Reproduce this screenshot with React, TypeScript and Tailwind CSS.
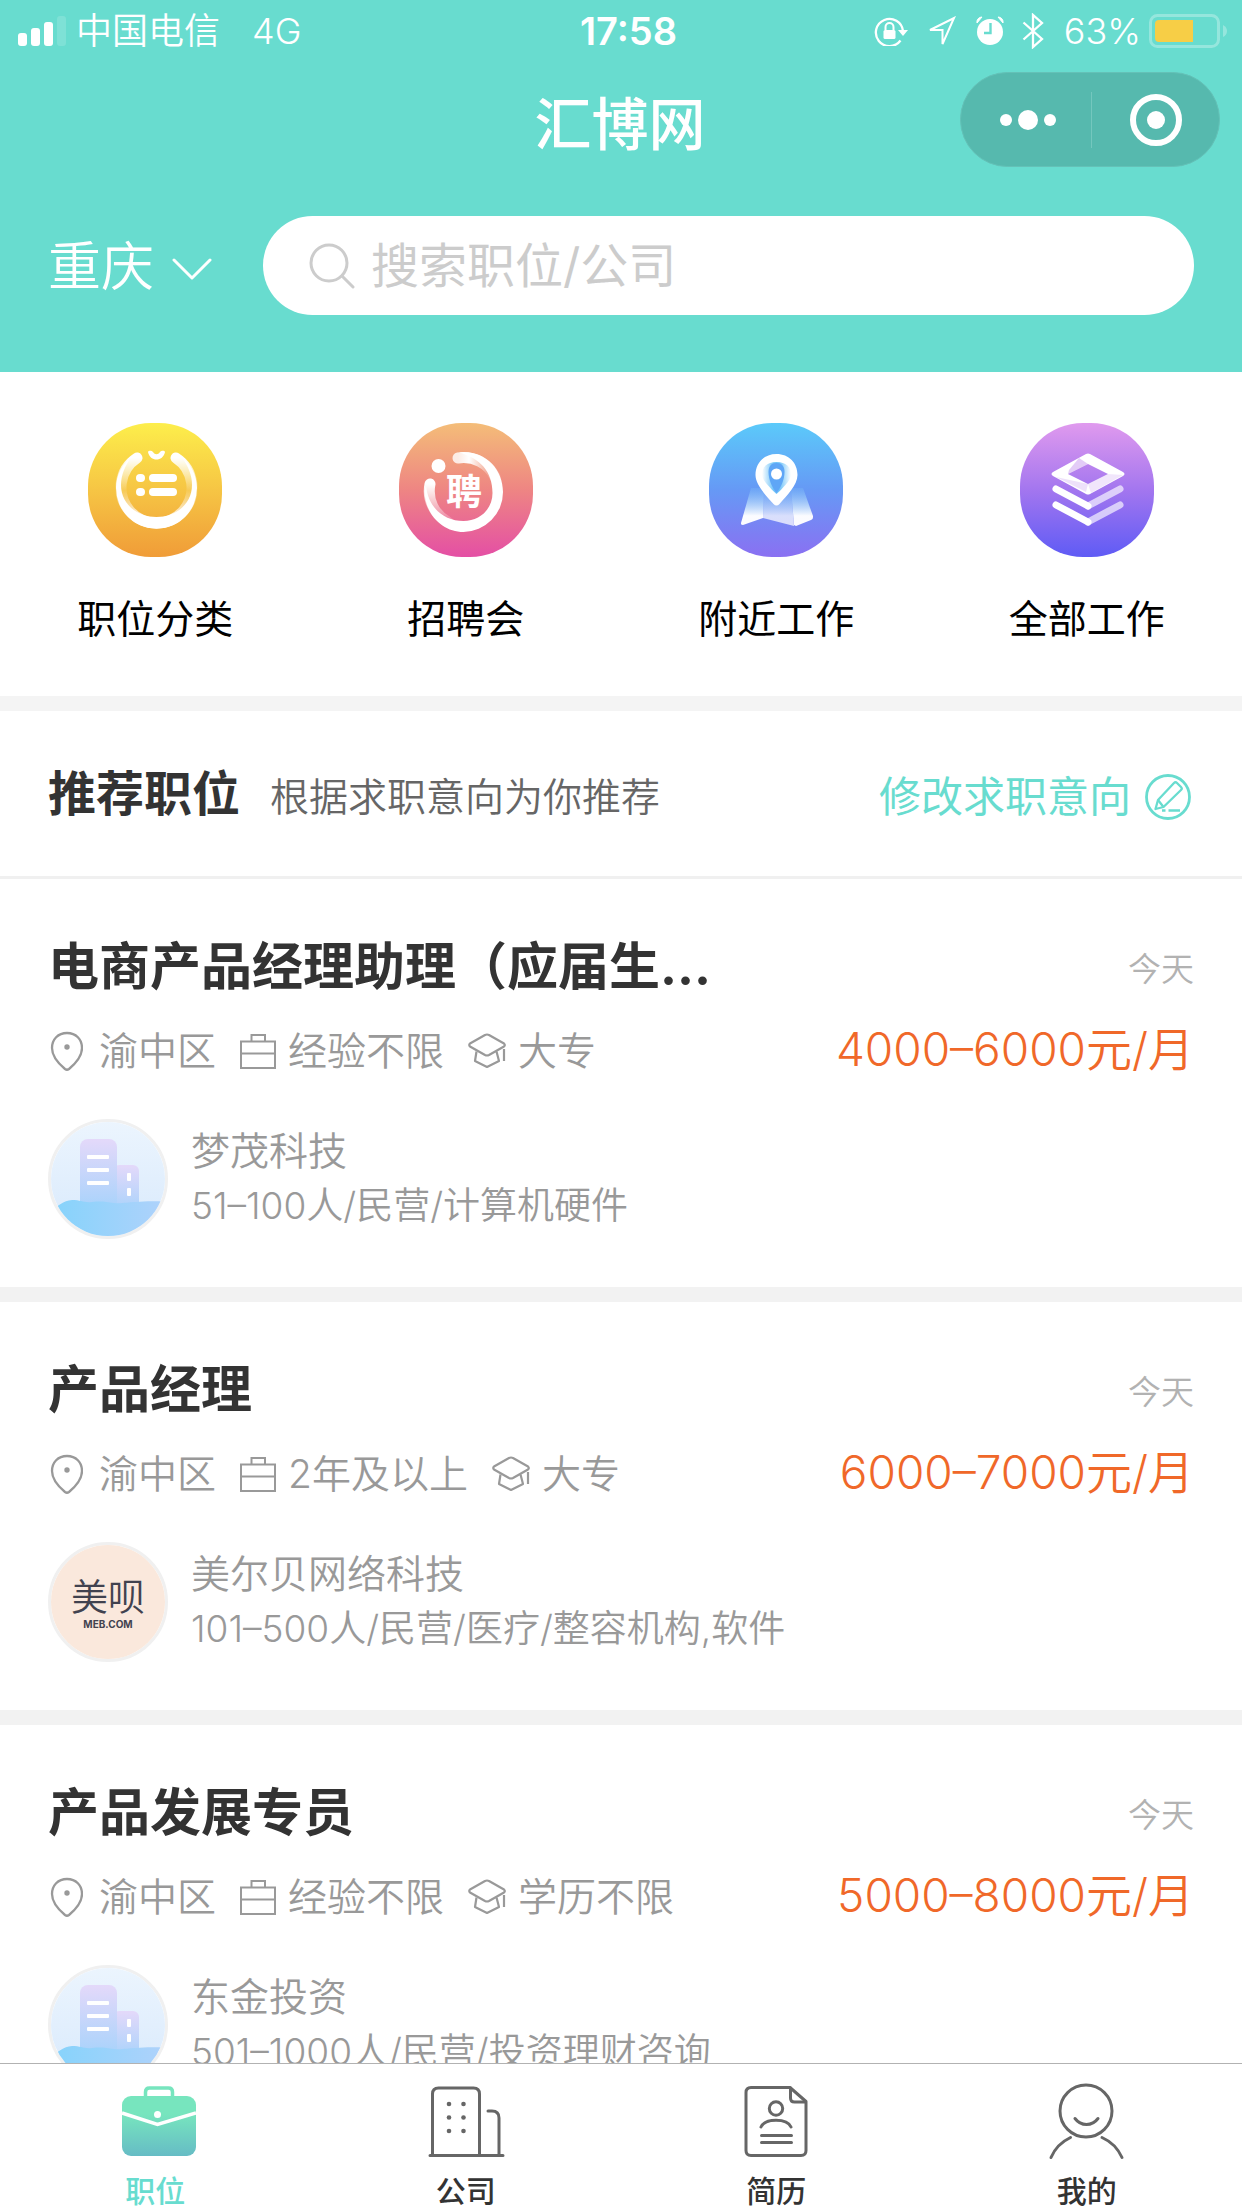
import React from 'react';

type Job = {
  id: number;
  title: string;
  date: string;
  area: string;
  experience: string;
  education: string;
  salary: string;
  company: string;
  detail: string;
  logo: 'default' | 'meb';
};

const JOBS: Job[] = [
  {
    id: 1,
    title: '电商产品经理助理（应届生...',
    date: '今天',
    area: '渝中区',
    experience: '经验不限',
    education: '大专',
    salary: '4000–6000元/月',
    company: '梦茂科技',
    detail: '51–100人/民营/计算机硬件',
    logo: 'default',
  },
  {
    id: 2,
    title: '产品经理',
    date: '今天',
    area: '渝中区',
    experience: '2年及以上',
    education: '大专',
    salary: '6000–7000元/月',
    company: '美尔贝网络科技',
    detail: '101–500人/民营/医疗/整容机构,软件',
    logo: 'meb',
  },
  {
    id: 3,
    title: '产品发展专员',
    date: '今天',
    area: '渝中区',
    experience: '经验不限',
    education: '学历不限',
    salary: '5000–8000元/月',
    company: '东金投资',
    detail: '501–1000人/民营/投资理财咨询',
    logo: 'default',
  },
];

const SHORTCUTS = [
  { label: '职位分类', Icon: CategoryIcon },
  { label: '招聘会', Icon: FairIcon },
  { label: '附近工作', Icon: NearbyIcon },
  { label: '全部工作', Icon: AllJobsIcon },
];

const TABS = [
  { label: '职位', Icon: JobsTabIcon, active: true },
  { label: '公司', Icon: CompanyTabIcon, active: false },
  { label: '简历', Icon: ResumeTabIcon, active: false },
  { label: '我的', Icon: MineTabIcon, active: false },
];

/* Shortcut icons */

function Badge({ id, stops, children }: { id: string; stops: string[]; children: React.ReactNode }) {
  return (
    <svg viewBox="0 0 134 134" className="w-[134px] h-[134px]" aria-hidden="true">
      <defs>
        <linearGradient id={id} x1="0" y1="0" x2="0" y2="1">
          {stops.map((color, i) => (
            <stop key={color} offset={i / (stops.length - 1)} stopColor={color} />
          ))}
        </linearGradient>
      </defs>
      <rect width="134" height="134" rx="63" fill={`url(#${id})`} />
      {children}
    </svg>
  );
}

function CategoryIcon() {
  return (
    <Badge id="badge-category" stops={['#fdee4b', '#f6c544', '#f09c38']}>
      <defs>
        <linearGradient id="category-fade" x1="0" y1="0" x2="0" y2="1">
          <stop offset="0" stopColor="#fff" />
          <stop offset="0.5" stopColor="#fff" stopOpacity="0.1" />
          <stop offset="1" stopColor="#fff" />
        </linearGradient>
      </defs>
      <path d="M49 35a35.5 35.5 0 1 0 39 0" fill="none" stroke="url(#category-fade)" strokeWidth="11" strokeLinecap="round" />
      <path d="M45 32C34 41 28 52 28 65a40.5 40.5 0 0 0 81 0c0-13-6-24-17-33 8 10 12 20 12 30 0 18-15 32-35.500 32S33 80 33 62c0-10 4-20 12-30z" fill="#fff" />
      <path d="M60 29c2 10 15 10 17 0-1-2-4-1-5 0-2 3-5 3-7 0-1-1-4-2-5 0z" fill="#fff" />
      <rect x="48" y="51" width="9" height="8" rx="4" fill="#fff" />
      <rect x="48" y="65" width="9" height="8" rx="4" fill="#fff" />
      <rect x="61" y="51" width="28" height="8" rx="4" fill="#fff" />
      <rect x="61" y="65" width="28" height="8" rx="4" fill="#fff" />
    </Badge>
  );
}

function FairIcon() {
  return (
    <Badge id="badge-fair" stops={['#f4bd78', '#ee8583', '#e44fa5']}>
      <defs>
        <linearGradient id="fair-fade" x1="0" y1="0" x2="1" y2="0">
          <stop offset="0" stopColor="#fff" stopOpacity="0.8" />
          <stop offset="0.3" stopColor="#fff" />
          <stop offset="0.8" stopColor="#fff" stopOpacity="0.2" />
        </linearGradient>
        <linearGradient id="fair-tail" x1="0" y1="0" x2="0" y2="1">
          <stop offset="0" stopColor="#fff" />
          <stop offset="1" stopColor="#fff" stopOpacity="0.1" />
        </linearGradient>
      </defs>
      <path d="M59 35a35 35 0 0 1 37 19" fill="none" stroke="url(#fair-fade)" strokeWidth="11" strokeLinecap="round" />
      <path d="M31 61a35 35 0 0 0 18 38" fill="none" stroke="url(#fair-tail)" strokeWidth="11" strokeLinecap="round" />
      <path d="M60 29.500c25-3 44 15.500 44 39.500a40 40 0 0 1-39.500 40C44 109 26 92 25.500 68L27 62c2 23 18 36 37.500 36C81 98 93.500 86 93.500 70c0-22-13-35-33.500-40.500z" fill="#fff" />
      <circle cx="39.5" cy="43" r="7" fill="#fff" />
      <text x="65" y="82" textAnchor="middle" fill="#fff" fontSize="36" className="font-bold">
        聘
      </text>
    </Badge>
  );
}

function NearbyIcon() {
  return (
    <Badge id="badge-nearby" stops={['#5bcafa', '#6699f5', '#8a70f2']}>
      <defs>
        <linearGradient id="map-fade" x1="0" y1="64" x2="0" y2="96" gradientUnits="userSpaceOnUse">
          <stop offset="0" stopColor="#8fe0fa" stopOpacity="0.1" />
          <stop offset="0.9" stopColor="#fff" stopOpacity="0.97" />
        </linearGradient>
        <linearGradient id="pin-fade" x1="0" y1="0" x2="1" y2="0">
          <stop offset="0" stopColor="#fff" />
          <stop offset="0.4" stopColor="#6fc3f8" />
          <stop offset="0.6" stopColor="#6fc3f8" />
          <stop offset="1" stopColor="#fff" />
        </linearGradient>
      </defs>
      <path d="M42 65h13l-1 30-20 7c-2 0-2-1-2-2z" fill="url(#map-fade)" />
      <path d="M55 65h27l3 38-31-8z" fill="url(#map-fade)" opacity="0.75" />
      <path d="M82 65h12l10 28c0 2 0 3-2 4l-15 6-2-1z" fill="url(#map-fade)" />
      <path
        d="M67.500 31C55 31 46.500 40 46.500 52c0 10 11 21 18 29 2 2 4 2 6 0 7-8 18-19 18-29 0-12-8.500-21-21-21z"
        fill="#fff"
      />
      <path d="M67.500 39C58 39 53 44 53 52c0 5 9 14 14.500 19C73 66 82 57 82 52c0-8-5-13-14.500-13z" fill="url(#pin-fade)" />
      <path d="M67.500 40c-6 0-8 4-8 9 0 8 4 16 8 21 4-5 8-13 8-21 0-5-2-9-8-9z" fill="#5fa6f6" />
      <circle cx="67.5" cy="51" r="5.5" fill="#fff" />
    </Badge>
  );
}

function AllJobsIcon() {
  return (
    <Badge id="badge-all" stops={['#e09aee', '#a376ef', '#5f5bf5']}>
      <path
        fillRule="evenodd"
        d="M66 31q2-1 4 0l33 18q3 2 0 4L70 71q-2 1-4 0L33 53q-3-2 0-4zM68 41L48 51l20 10 20-10z"
        fill="#fff"
      />
      <path d="M59 35l9 6-20 10 1-4z" fill="#c79af0" opacity="0.5" />
      <path d="M103 52L71 70l-3-9 20-10z" fill="#c79af0" opacity="0.25" />
      <path d="M36 54l32 7-2 8z" fill="#c79af0" opacity="0.3" />
      <g fill="none" stroke="#fff" strokeWidth="7" strokeLinecap="round" strokeLinejoin="round">
        <path d="M100 66L68 83M100 82l-32 17" opacity="0.65" />
        <path d="M36 66l32 17M36 82l32 17" />
      </g>
    </Badge>
  );
}

/* Tab bar icons */

function JobsTabIcon() {
  return (
    <svg viewBox="-7 0 81 70" className="w-[81px] h-[70px]" aria-hidden="true">
      <defs>
        <linearGradient id="tab-jobs" x1="0" y1="0" x2="0" y2="1">
          <stop offset="0.3" stopColor="#77e5be" />
          <stop offset="1" stopColor="#66bcc5" />
        </linearGradient>
      </defs>
      <path d="M23.500 11V6q0-4 4-4h19q4 0 4 4v5" fill="none" stroke="#77e5be" strokeWidth="3.5" />
      <rect y="10" width="74" height="60" rx="9" fill="url(#tab-jobs)" />
      <path d="M0 27l35.500 11.500L74 27" fill="none" stroke="#fff" strokeWidth="3.5" />
      <circle cx="35.5" cy="28.5" r="3.5" fill="#fff" />
    </svg>
  );
}

function CompanyTabIcon() {
  return (
    <svg viewBox="-2 0 79 71" className="w-[79px] h-[71px]" fill="none" stroke="#666" strokeWidth="3" strokeLinecap="round" aria-hidden="true">
      <path d="M4.500 69V8q0-6 6-6h35q6 0 6 6v61" />
      <path d="M60 25h4q7 0 7 7v37M2 69.500h73" />
      <g fill="#666" stroke="none">
        <circle cx="21" cy="18" r="2.3" />
        <circle cx="35.5" cy="18" r="2.3" />
        <circle cx="21" cy="31.5" r="2.3" />
        <circle cx="35.5" cy="31.5" r="2.3" />
        <circle cx="21" cy="45" r="2.3" />
        <circle cx="35.5" cy="45" r="2.3" />
      </g>
    </svg>
  );
}

function ResumeTabIcon() {
  return (
    <svg viewBox="0 0 64 71" className="w-16 h-[71px]" fill="none" stroke="#666" strokeWidth="3" strokeLinecap="round" strokeLinejoin="round" aria-hidden="true">
      <path d="M46 1.500H7q-5 0-5 5v58q0 5 5 5h50q5 0 5-5V15.500z" />
      <path d="M46.500 2v10q0 4 4 4H61" />
      <circle cx="32" cy="22.5" r="6.7" />
      <path d="M17 41c4-9 26-9 30 0M17.500 49.500h30M17.500 56.500h30" />
    </svg>
  );
}

function MineTabIcon() {
  return (
    <svg viewBox="0 0 75 77" className="w-[75px] h-[77px]" fill="none" stroke="#666" strokeWidth="3" strokeLinecap="round" aria-hidden="true">
      <circle cx="37" cy="28" r="26" />
      <path d="M26 35.500c6 8 17 8 23 0M21.500 54.500C12 59 6 65 2 74.500M53 54.500c9 4 15.500 10 20 20" />
    </svg>
  );
}

/* Job meta icons */

function PinIcon() {
  return (
    <svg viewBox="0 0 34 40" className="w-[34px] h-10" fill="none" stroke="#999" strokeWidth="2.3" strokeLinejoin="round" aria-hidden="true">
      <path d="M18 2C9 2 3 8.500 3 17c0 8.500 7 16 13 21q2 1.500 4 0c6-5 13-12.500 13-21C33 8.500 27 2 18 2z" />
      <circle cx="18" cy="16" r="2.7" fill="#999" stroke="none" />
    </svg>
  );
}

function BriefcaseIcon() {
  return (
    <svg viewBox="0 0 36 36" className="w-9 h-9" fill="none" stroke="#999" strokeWidth="2" aria-hidden="true">
      <path d="M1 8.500h34V35H1zM11.500 8V2h13.500v6M1 20.500h34" />
    </svg>
  );
}

function CapIcon() {
  return (
    <svg viewBox="0 0 38 36" className="w-[38px] h-9" fill="none" stroke="#999" strokeWidth="2.2" strokeLinejoin="round" aria-hidden="true">
      <path d="M17 2q2-1 4 0l15 8.500q1.500 1.500 0 3L21 22q-2 1-4 0L2 13.500q-1.500-1.500 0-3z" />
      <path d="M8.500 18.500L7 28l12 6 12-6-2.500-9.500M36 16v12" />
    </svg>
  );
}

function EditIcon() {
  return (
    <svg viewBox="0 0 46 46" className="w-[46px] h-[46px]" fill="none" stroke="#68dccf" strokeWidth="2.8" strokeLinejoin="round" aria-hidden="true">
      <circle cx="23" cy="23" r="21.5" />
      <path d="M29 9q1.500-1.500 3 0l4 4q1.500 1.500 0 3L18.500 33 10.500 35l2.500-9z" strokeWidth="2.3" />
      <path d="M13 26l5.500 7M17 36.500h3.500M23.500 36.500H35" strokeWidth="2.3" />
    </svg>
  );
}

/* Default company picture */

function BuildingLogo() {
  return (
    <svg viewBox="3 3 114 114" className="size-full" aria-hidden="true">
      <defs>
        <linearGradient id="logo-sky" x1="0" y1="0" x2="0" y2="1">
          <stop offset="0" stopColor="#ecf5fe" />
          <stop offset="1" stopColor="#d8e9fc" />
        </linearGradient>
        <linearGradient id="logo-tower" x1="0" y1="0" x2="0" y2="1">
          <stop offset="0" stopColor="#e4d9fa" />
          <stop offset="1" stopColor="#a3d2fb" />
        </linearGradient>
        <linearGradient id="logo-ground" x1="0" y1="0" x2="1" y2="0">
          <stop offset="0" stopColor="#84d3fb" />
          <stop offset="1" stopColor="#b0d2fb" />
        </linearGradient>
      </defs>
      <rect width="120" height="120" fill="url(#logo-sky)" />
      <rect x="65" y="46" width="26" height="50" rx="6" fill="url(#logo-tower)" />
      <rect x="32" y="20" width="37" height="75" rx="8" fill="url(#logo-tower)" />
      <path d="M0 96c8-8 14-14 24-15 9 0 12 3 20 2 10-1 14 0 22 1 8 1 12-1 22-1 10-1 22-1 32 0v36H0z" fill="url(#logo-ground)" />
      <g fill="#fff">
        <rect x="39" y="36" width="22" height="4" rx="1" />
        <rect x="39" y="49" width="22" height="4" rx="1" />
        <rect x="39" y="62" width="22" height="4" rx="1" />
        <rect x="79" y="54" width="4" height="8" rx="1" />
        <rect x="79" y="69" width="4" height="8" rx="1" />
      </g>
    </svg>
  );
}

function MebLogo() {
  return (
    <div className="size-full pt-1 bg-[#fae8dc] text-[#41424f] flex flex-col items-center justify-center">
      <span className="text-[37px] leading-10">美呗</span>
      <span className="text-[10px] leading-3 font-bold">MEB.COM</span>
    </div>
  );
}

function StatusBar() {
  return (
    <div className="grid grid-cols-3 items-center h-[62px] pl-[18px] pr-[15px] text-[36px] leading-[62px]">
      <div className="flex items-center">
        <svg viewBox="0 0 48 30" className="w-12 h-[30px]" fill="#fff" aria-hidden="true">
          <rect y="17" width="9" height="13" rx="3" />
          <rect x="13" y="12" width="9" height="18" rx="3" />
          <rect x="26" y="6" width="9" height="24" rx="3" />
          <rect x="39" width="9" height="30" rx="3" opacity="0.15" />
        </svg>
        <span className="ml-[10px] font-[350]">中国电信</span>
        <span className="ml-8 font-[350]">4G</span>
      </div>
      <span className="pl-3 text-center text-[38px] font-semibold">17:58</span>
      <div className="flex items-center justify-end">
        <svg viewBox="0 0 34 30" className="w-[34px] h-[30px] mr-[18px]" fill="none" stroke="#fff" strokeWidth="2.3" aria-hidden="true">
          <path d="M26.500 24.500A13.600 13.600 0 1 1 29 15" />
          <path d="M24 14h10l-5 6z" fill="#fff" stroke="none" />
          <rect x="9.5" y="14" width="12" height="9" rx="1.5" fill="#fff" stroke="none" />
          <path d="M11.500 14v-3a4 4 0 0 1 8 0v3" strokeWidth="2" />
        </svg>
        <svg viewBox="0 0 30 30" className="w-[30px] h-[30px] mr-5" fill="none" stroke="#fff" strokeWidth="2" aria-hidden="true">
          <path d="M4 14L28 2 16.500 28V14z" />
        </svg>
        <svg viewBox="0 0 28 30" className="w-7 h-[30px] mr-[18px]" fill="#fff" aria-hidden="true">
          <circle cx="14" cy="16" r="13" />
          <path d="M1 7a5 5 0 0 1 5-6zM27 7a5 5 0 0 0-5-6z" stroke="#fff" />
          <path d="M14.500 7v10H8" fill="none" stroke="#68dccf" strokeWidth="2.4" />
        </svg>
        <svg viewBox="0 0 22 36" className="w-[22px] h-9 mr-5" fill="none" stroke="#fff" strokeWidth="2.3" aria-hidden="true">
          <path d="M1.500 9.500L20 26l-9 8V2l9 8L1.500 26.500" />
        </svg>
        <span className="font-[350]">63%</span>
        <svg viewBox="0 0 78 34" className="w-[78px] h-[34px] ml-2" aria-hidden="true">
          <rect x="1.5" y="1.5" width="68" height="31" rx="7" fill="none" stroke="#fff" strokeWidth="3" opacity="0.3" />
          <path d="M44 6H10q-4 0-4 4v14q0 4 4 4h34z" fill="#f7ce46" />
          <path d="M74 11q4 2 4 6t-4 6z" fill="#fff" opacity="0.3" />
        </svg>
      </div>
    </div>
  );
}

function Header() {
  return (
    <header className="shrink-0 bg-[#68dccf] text-white">
      <StatusBar />
      <div className="grid grid-cols-3 items-center pt-[10px] pr-[22px]">
        <span />
        <h1 className="pt-[10px] pl-5 text-[57px] leading-[84px] text-center font-medium">汇博网</h1>
        <div className="justify-self-end flex items-center w-[260px] h-[95px] pl-1 rounded-full bg-[#56b9ae] border border-[#64c1b7]">
          <button aria-label="更多" className="flex-1 flex items-center justify-center gap-[6px]">
            <span className="size-3 rounded-full bg-white" />
            <span className="size-5 rounded-full bg-white" />
            <span className="size-3 rounded-full bg-white" />
          </button>
          <span className="w-px h-14 bg-[#74c7be]" />
          <button aria-label="关闭" className="flex-1 flex items-center justify-center">
            <span className="size-[52px] rounded-full border-[6px] border-white flex items-center justify-center">
              <span className="size-[18px] rounded-full bg-white" />
            </span>
          </button>
        </div>
      </div>
      <div className="flex items-center px-12 pt-[49px] pb-[57px]">
        <button className="flex items-center text-[53px] leading-[96px] font-[350]">
          <span className="pt-0.5">重庆</span>
          <svg viewBox="0 0 40 24" className="w-10 h-6 ml-[18px] mt-2" fill="none" stroke="#fff" strokeWidth="3" strokeLinecap="round" strokeLinejoin="round" aria-hidden="true">
            <path d="M2 2l18 18L38 2" />
          </svg>
        </button>
        <label className="ml-[51px] flex-1 flex items-center h-[99px] rounded-full bg-white px-[46px]">
          <svg viewBox="0 0 46 46" className="w-[46px] h-[46px] shrink-0" fill="none" stroke="#ccc" strokeWidth="3" strokeLinecap="round" aria-hidden="true">
            <circle cx="20" cy="20" r="18" />
            <path d="M33 33l11 11" />
          </svg>
          <input
            type="search"
            aria-label="搜索职位/公司"
            placeholder="搜索职位/公司"
            className="ml-4 flex-1 min-w-0 text-[48px] leading-[72px] text-[#333] placeholder:text-[#ccc] outline-none"
          />
        </label>
      </div>
    </header>
  );
}

function JobCard({ job }: { job: Job }) {
  return (
    <article className="px-12 pt-[55px] pb-12 border-b-[15px] border-[#f2f2f2]">
      <div className="flex items-center justify-between">
        <h3 className="text-[51px] leading-[66px] font-bold text-[#333]">{job.title}</h3>
        <time className="pt-1 text-[33px] leading-[60px] font-[350] text-[#b2b2b2]">{job.date}</time>
      </div>
      <div className="mt-[21px] flex items-center justify-between text-[39px] leading-[60px] font-[350] text-[#999]">
        <div className="flex items-center gap-6 pl-px">
          <span className="flex items-center gap-4">
            <PinIcon />
            {job.area}
          </span>
          <span className="flex items-center gap-3">
            <BriefcaseIcon />
            {job.experience}
          </span>
          <span className="flex items-center gap-3">
            <CapIcon />
            {job.education}
          </span>
        </div>
        <span className="pb-1 text-[46px] leading-[56px] text-[#f06829]">{job.salary}</span>
      </div>
      <div className="mt-[38px] flex items-center gap-[23px] font-[350] text-[#999]">
        <div className="size-[120px] shrink-0 rounded-full border-[3px] border-[#f0f0f0] overflow-hidden">
          {job.logo === 'meb' ? <MebLogo /> : <BuildingLogo />}
        </div>
        <div className="pb-0.5">
          <p className="text-[39px] leading-[55px]">{job.company}</p>
          <p className="text-[37px] leading-[55px]">{job.detail}</p>
        </div>
      </div>
    </article>
  );
}

function TabBar() {
  return (
    <nav className="shrink-0 grid grid-cols-4 h-[145px] bg-white border-t border-[#b2b2b2]">
      {TABS.map(({ label, Icon, active }) => (
        <a
          key={label}
          href="#"
          aria-current={active ? 'page' : undefined}
          className={`flex flex-col items-center pt-[18px] text-[30px] leading-[34px] font-medium ${
            active ? 'text-[#68dccf]' : 'text-[#333]'
          }`}>
          <span className="flex items-center h-[78px] mb-[14px]">
            <Icon />
          </span>
          {label}
        </a>
      ))}
    </nav>
  );
}

export default function App() {
  return (
    <div className="h-screen flex flex-col overflow-hidden bg-white font-[Inter,'Noto_Sans_CJK_SC',sans-serif]" lang="zh-CN">
      <Header />
      <main className="flex-1 min-h-0 overflow-y-auto [scrollbar-width:none]">
        <section className="grid grid-cols-4 pt-[51px] pb-12 border-b-[15px] border-[#f4f4f4]">
          {SHORTCUTS.map(({ label, Icon }) => (
            <a key={label} href="#" className="flex flex-col items-center text-[39px] leading-[58px] text-black">
              <Icon />
              <span className="mt-[33px]">{label}</span>
            </a>
          ))}
        </section>
        <section>
          <div className="flex items-center justify-between h-[168px] px-12 border-b-[3px] border-[#f0f0f0]">
            <div className="flex items-baseline">
              <h2 className="text-[48px] leading-[72px] font-bold text-[#333]">推荐职位</h2>
              <span className="ml-[30px] text-[39px] font-[350] text-[#666]">根据求职意向为你推荐</span>
            </div>
            <button className="flex items-center gap-[14px] pt-[6px] pr-[3px] text-[42px] leading-[60px] text-[#68dccf]">
              修改求职意向
              <EditIcon />
            </button>
          </div>
          {JOBS.map((job) => (
            <JobCard key={job.id} job={job} />
          ))}
        </section>
      </main>
      <TabBar />
    </div>
  );
}
